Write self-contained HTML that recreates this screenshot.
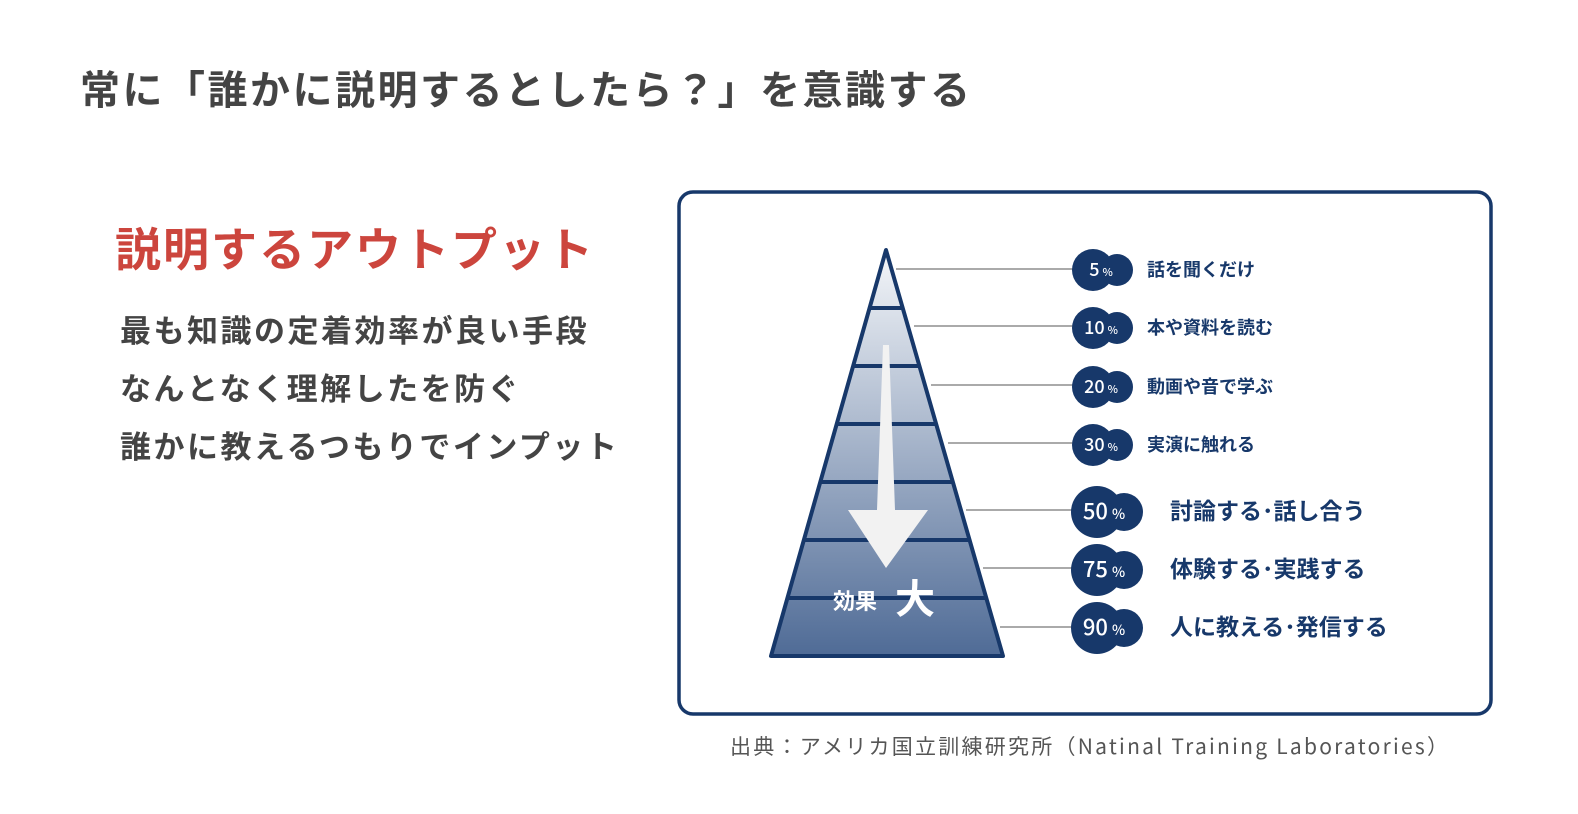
<!DOCTYPE html>
<html><head><meta charset="utf-8"><style>
body{margin:0;width:1578px;height:814px;background:#fff;position:relative;overflow:hidden;font-family:"Noto Sans CJK JP",sans-serif}
.t{position:absolute;white-space:nowrap;font-weight:bold}
</style></head><body>
<div class="t" style="left:80px;top:58px;font-size:40px;color:#444;letter-spacing:2.5px">常に「誰かに説明するとしたら？」を意識する</div>
<div class="t" style="left:115px;top:214px;font-size:46px;color:#cc453d;letter-spacing:2px">説明するアウトプット</div>
<div class="t" style="left:120px;top:300px;font-size:31px;color:#444;line-height:58px;letter-spacing:2.5px">最も知識の定着効率が良い手段<br>なんとなく理解したを防ぐ<br>誰かに教えるつもりでインプット</div>
<svg style="position:absolute;left:0;top:0" width="1578" height="814" font-family="Noto Sans CJK JP, sans-serif">
<defs><linearGradient id="g" x1="0" y1="250" x2="0" y2="656" gradientUnits="userSpaceOnUse"><stop offset="0" stop-color="#f4f6f9"/><stop offset="1" stop-color="#4f6b96"/></linearGradient></defs>
<rect x="679" y="192" width="812" height="522" rx="14" fill="#fff" stroke="#17386a" stroke-width="3.5"/>
<g stroke="#aaa" stroke-width="2">
<line x1="896" y1="269" x2="1080" y2="269"/><line x1="914" y1="326" x2="1080" y2="326"/><line x1="931" y1="385" x2="1080" y2="385"/><line x1="948" y1="443" x2="1080" y2="443"/><line x1="966" y1="510" x2="1080" y2="510"/><line x1="983" y1="568" x2="1080" y2="568"/><line x1="1000" y1="627" x2="1080" y2="627"/>
</g>
<polygon points="886,250 771,656 1003,656" fill="url(#g)" stroke="#17386a" stroke-width="4" stroke-linejoin="round"/>
<g stroke="#17386a" stroke-width="4">
<line x1="870" y1="308" x2="903" y2="308"/><line x1="854" y1="366" x2="919" y2="366"/><line x1="837" y1="424" x2="936" y2="424"/><line x1="821" y1="482" x2="952" y2="482"/><line x1="804" y1="540" x2="969" y2="540"/><line x1="788" y1="598" x2="985" y2="598"/>
</g>
<polygon points="883,345 889,345 895,510 928,510 886,568 848,510 877,510" fill="#f2f2f2"/>
<text x="833" y="609" font-size="22" fill="#fff" font-weight="bold">効果</text>
<text x="895" y="613" font-size="40" fill="#fff" font-weight="bold">大</text>
<g fill="#17386a">
<circle cx="1093" cy="270" r="21"/><circle cx="1117" cy="270" r="16"/>
<circle cx="1093" cy="328" r="21"/><circle cx="1117" cy="328" r="16"/>
<circle cx="1093" cy="387" r="21"/><circle cx="1117" cy="387" r="16"/>
<circle cx="1093" cy="445" r="21"/><circle cx="1117" cy="445" r="16"/>
<circle cx="1097" cy="512" r="26"/><circle cx="1124" cy="512" r="19"/>
<circle cx="1097" cy="570" r="26"/><circle cx="1124" cy="570" r="19"/>
<circle cx="1097" cy="628" r="26"/><circle cx="1124" cy="628" r="19"/>
</g>
<g fill="#fff" text-anchor="middle" font-weight="500">
<text x="1101" y="276" font-size="18">5<tspan font-size="11" dx="3">%</tspan></text>
<text x="1101" y="334" font-size="18">10<tspan font-size="11" dx="3">%</tspan></text>
<text x="1101" y="393" font-size="18">20<tspan font-size="11" dx="3">%</tspan></text>
<text x="1101" y="451" font-size="18">30<tspan font-size="11" dx="3">%</tspan></text>
<text x="1104" y="519" font-size="22">50<tspan font-size="14" dx="4">%</tspan></text>
<text x="1104" y="577" font-size="22">75<tspan font-size="14" dx="4">%</tspan></text>
<text x="1104" y="635" font-size="22">90<tspan font-size="14" dx="4">%</tspan></text>
</g>
<g fill="#17386a" font-weight="bold">
<text x="1147" y="276" font-size="18">話を聞くだけ</text>
<text x="1147" y="334" font-size="18">本や資料を読む</text>
<text x="1147" y="393" font-size="18">動画や音で学ぶ</text>
<text x="1147" y="451" font-size="18">実演に触れる</text>
<text x="1170" y="519" font-size="23">討論する･話し合う</text>
<text x="1170" y="577" font-size="23">体験する･実践する</text>
<text x="1170" y="635" font-size="23">人に教える･発信する</text>
</g>
</svg>
<div style="position:absolute;left:730px;top:731px;font-size:21px;color:#555;white-space:nowrap;letter-spacing:2.25px">出典：アメリカ国立訓練研究所（Natinal Training Laboratories）</div>
</body></html>
